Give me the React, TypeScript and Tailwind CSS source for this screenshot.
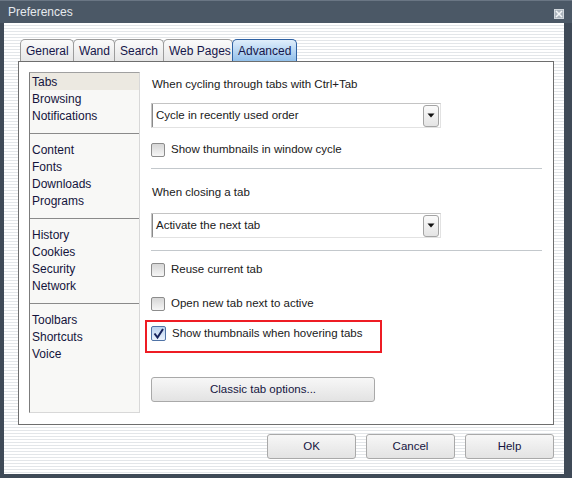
import React from 'react';

type Tab = { label: string; w: string; active?: boolean };

const tabs: Tab[] = [
  { label: 'General', w: 'w-[54px]' },
  { label: 'Wand', w: 'w-[42px]' },
  { label: 'Search', w: 'w-[50px]' },
  { label: 'Web Pages', w: 'w-[70px]' },
  { label: 'Advanced', w: 'w-[65px]', active: true },
];

const groups = [
  ['Tabs', 'Browsing', 'Notifications'],
  ['Content', 'Fonts', 'Downloads', 'Programs'],
  ['History', 'Cookies', 'Security', 'Network'],
  ['Toolbars', 'Shortcuts', 'Voice'],
];

function Checkbox({ checked }: { checked?: boolean }) {
  if (checked) {
    return (
      <div className="w-[15px] h-[15px] shrink-0 rounded-[2px] border border-[#4f73a6] bg-gradient-to-b from-[#b9d1ee] to-[#eaf2fc] flex items-center justify-center">
        <svg width="13" height="13" viewBox="0 0 13 13">
          <path d="M2.5 6.5 L5.5 10.5 L11 2" fill="none" stroke="#16235c" strokeWidth="2" />
        </svg>
      </div>
    );
  }
  return (
    <div className="w-[14px] h-[14px] shrink-0 rounded-[2px] border border-[#8c8c8c] bg-gradient-to-b from-[#d6d6d6] to-[#f6f6f6]" />
  );
}

function CheckRow({ label, checked }: { label: string; checked?: boolean }) {
  return (
    <div className="flex items-center h-[14px] gap-[6px]">
      <Checkbox checked={checked} />
      <span className="leading-none text-[#202020]">{label}</span>
    </div>
  );
}

function Select({ value }: { value: string }) {
  return (
    <div className="w-[290px] h-[25px] border border-[#e2e2e2] border-t-[#c4c4c4] border-l-[#c4c4c4] bg-white flex items-center">
      <div className="h-full w-px bg-[#8a8a8a]" />
      <span className="flex-1 pl-[3px] text-[#202020]">{value}</span>
      <div className="w-[16px] h-[22px] mr-[1px] rounded-[3px] border border-[#a4a4a4] bg-gradient-to-b from-[#fbfbfb] to-[#e4e4e4] flex items-center justify-center">
        <svg width="8" height="5" viewBox="0 0 8 5">
          <path d="M0.5 0.5 H7.5 L4 4.5 Z" fill="#111" />
        </svg>
      </div>
    </div>
  );
}

function Button({ label, w }: { label: string; w: string }) {
  return (
    <div
      className={`${w} h-[25px] rounded-[3px] border border-[#a9a9a9] bg-gradient-to-b from-[#f7f7f7] to-[#e3e3e3] flex items-center justify-center text-[#15153f]`}
    >
      {label}
    </div>
  );
}

export default function App() {
  return (
    <div className="w-[572px] h-[478px] bg-[#3f4a57] flex flex-col font-[family-name:Liberation_Sans,Arial,sans-serif] text-[11.5px]">
      {/* title bar */}
      <div className="h-[23px] bg-[#4b5866] border-t border-[#6a7684] flex items-center justify-between pl-[8px] pr-[8px]">
        <span className="text-[#e6eaee] text-[12px]">Preferences</span>
        <div className="w-[10px] h-[10px] mt-[4px] bg-[#aab3bc] border border-[#d0d6dc] flex items-center justify-center">
          <svg width="8" height="8" viewBox="0 0 8 8">
            <path d="M1 1 L7 7 M7 1 L1 7" stroke="#f4f6f8" strokeWidth="1.5" />
          </svg>
        </div>
      </div>

      {/* client area */}
      <div className="ml-[4px] w-[560px] h-[451px] bg-[repeating-linear-gradient(to_bottom,#ffffff_0px,#ffffff_2px,#e3e6e9_2px,#e3e6e9_3px)] flex flex-col pt-[16px] pl-[14px]">
        {/* tabs */}
        <div className="flex ml-[2px] h-[22px]">
          {tabs.map((t, i) => (
            <div
              key={t.label}
              className={`${t.w} ${i > 0 ? '-ml-px' : ''} h-[22px] rounded-t-[5px] border border-b-0 flex items-center pl-[5px] text-[12px] ${
                t.active
                  ? 'border-[#2f62a3] bg-gradient-to-b from-[#e0eefb] to-[#92c0ea] text-[#16164a] relative z-10'
                  : 'border-[#9c9c9c] bg-gradient-to-b from-[#fbfbfb] to-[#e6e6e6] text-[#16164a]'
              }`}
            >
              {t.label}
            </div>
          ))}
        </div>

        {/* panel */}
        <div className="w-[536px] h-[364px] bg-white border border-[#6e6e6e] flex">
          {/* left list */}
          <div className="ml-[10px] mt-[10px] w-[111px] h-[341px] bg-[#f8f8f6] border border-[#d8d8d8] border-l-[#7c7c7c] border-t-[#a0a0a0] flex flex-col">
            {groups.map((g, gi) => (
              <div
                key={gi}
                className={`flex flex-col ${gi > 0 ? 'border-t border-[#8a8a8a] pt-[7px]' : ''} ${gi < groups.length - 1 ? 'pb-[9px]' : ''}`}
              >
                {g.map((item) => (
                  <div
                    key={item}
                    className={`h-[17px] flex items-center pl-[2px] text-[12px] text-[#14143c] ${item === 'Tabs' ? 'bg-[#ece9e1]' : ''}`}
                  >
                    {item}
                  </div>
                ))}
              </div>
            ))}
          </div>

          {/* right column */}
          <div className="ml-[11px] pt-[14px] flex flex-col">
            <div className="h-[17px] flex items-center pl-[1px] text-[#202020]">When cycling through tabs with Ctrl+Tab</div>
            <div className="mt-[10px]">
              <Select value="Cycle in recently used order" />
            </div>
            <div className="mt-[15px]">
              <CheckRow label="Show thumbnails in window cycle" />
            </div>
            <div className="mt-[11px] w-[391px] h-px bg-[#c3c8cc]" />
            <div className="mt-[15px] h-[17px] flex items-center pl-[1px] text-[#202020]">When closing a tab</div>
            <div className="mt-[12px]">
              <Select value="Activate the next tab" />
            </div>
            <div className="mt-[12px] w-[391px] h-px bg-[#c3c8cc]" />
            <div className="mt-[12px]">
              <CheckRow label="Reuse current tab" />
            </div>
            <div className="mt-[20px]">
              <CheckRow label="Open new tab next to active" />
            </div>
            <div className="mt-[9px] -ml-[6px] w-[237px] h-[33px] border-2 border-[#ee1c24] pl-[4px] pt-[4px]">
              <div className="flex items-center h-[15px] gap-[6px]">
                <Checkbox checked />
                <span className="leading-none text-[#202020]">Show thumbnails when hovering tabs</span>
              </div>
            </div>
            <div className="mt-[24px]">
              <Button label="Classic tab options..." w="w-[224px]" />
            </div>
          </div>
        </div>

        {/* dialog buttons */}
        <div className="mt-[9px] w-[536px] flex justify-end gap-[10px]">
          <Button label="OK" w="w-[89px]" />
          <Button label="Cancel" w="w-[89px]" />
          <Button label="Help" w="w-[89px]" />
        </div>
      </div>
    </div>
  );
}
